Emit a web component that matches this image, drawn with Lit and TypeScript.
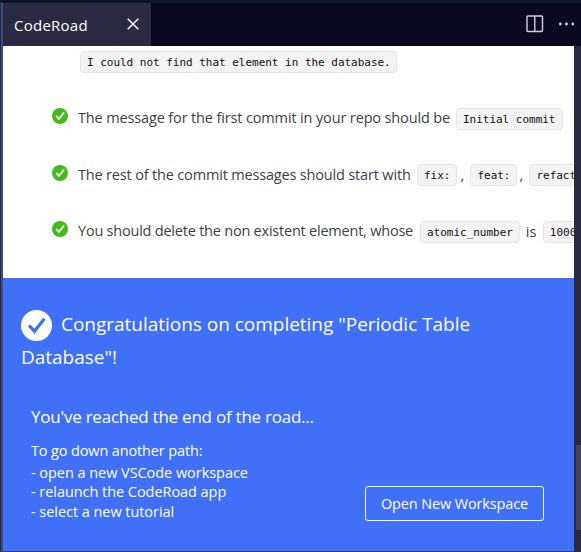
import { LitElement, html, css, svg } from "lit";
import { customElement } from "lit/decorators.js";

@customElement("check-mark")
class CheckMark extends LitElement {
  static styles = css`
    :host { display: block; flex: none; }
    svg { display: block; width: 100%; height: 100%; }
    .tick { fill: none; stroke: var(--tick, #fff); stroke-width: 3.1; stroke-linejoin: miter; stroke-linecap: round; }
  `;
  render() {
    return html`<svg viewBox="0 0 30 30">
      <circle cx="15" cy="15" r="15" fill="currentColor"></circle>
      <path class="tick" d="M8.6 15.8 13 20.6 21.8 9.4"></path>
    </svg>`;
  }
}

@customElement("app-root")
class AppRoot extends LitElement {
  static styles = css`
    :host { display: block; }
    * { box-sizing: border-box; }
    .window { width: 581px; height: 552px; display: flex; overflow: hidden; background: #292a40;
      font-family: "Open Sans", "Noto Sans", sans-serif; white-space: nowrap; }
    .edge { width: 3px; flex: none; background: #424b78; border-left: 1px solid #25284c; border-top: 3px solid #0e1727; }
    .main { flex: 1; min-width: 0; display: flex; flex-direction: column; }
    .tabs { height: 46px; flex: none; border-top: 3px solid #0e1727; background: #090922; display: flex; align-items: stretch; }
    .tab { width: 148px; background: #2a2a42; color: #fff; display: flex; align-items: center; justify-content: space-between; padding: 0 12px 0 11px; }
    .tabname { font-size: 15px; letter-spacing: 0.25px; line-height: 20px; margin-top: 1px; }
    .close { width: 12px; height: 12px; margin-top: -1px; }
    .actions { margin-left: auto; display: flex; align-items: center; gap: 14px; padding: 0 6px 2px 0; }
    svg { display: block; }
    .below { flex: 1; min-height: 0; display: flex; }
    .panel { width: 571px; flex: none; overflow: hidden; background: #fff; display: flex; flex-direction: column; border-bottom: 1px solid #3c3f74; }
    .gutter { flex: 1; background: #292a40; padding: 399px 0 0 2px; }
    .thumb { height: 85px; background: #45455a; }
    .tasks { height: 232px; flex: none; overflow: hidden; color: #3c3f44; font-size: 14.5px; }
    .detail { height: 44px; padding: 5px 0 0 77px; }
    .row { height: 56.5px; padding-left: 49px; display: flex; align-items: center; }
    .row check-mark { width: 16px; height: 16px; margin: -4px 10px 0 0; color: #45b81c; --tick: #fff; }
    .text { flex: none; line-height: 22px; }
    code { display: block; flex: none; height: 22px; padding: 0 6px; border: 1px solid #e6e6e6; border-radius: 4px;
      background: #f3f3f3; color: #111; font: 11px/21px "DejaVu Sans Mono", monospace; letter-spacing: -0.02px; }
    .row code { margin-top: 1px; }
    .row code.initial { width: 107px; }
    .detail code { width: 317px; }
    .done { flex: 1; background: #4070f8; color: #fff; padding: 30px 30px 0 18px; }
    .title { font-size: 19px; line-height: 33px; letter-spacing: -0.02px; }
    .line { display: flex; align-items: center; }
    .line check-mark { width: 31px; height: 31px; margin-right: 9px; margin-top: 2px; --tick: #4070f8; }
    .foot { margin: 30px 0 0 10px; display: flex; justify-content: space-between; align-items: flex-end; }
    .end { font-size: 17px; line-height: 26px; margin-bottom: 11px; letter-spacing: -0.24px; }
    .steps { font-size: 14.5px; line-height: 19.5px; letter-spacing: -0.05px; }
    .intro { margin-bottom: 2px; letter-spacing: -0.14px; }
    .button { width: 179px; height: 35px; border: 1px solid #fff; border-radius: 3px; background: none; color: #fff; padding: 0;
      font: 14.5px "Open Sans", sans-serif; letter-spacing: -0.14px; }
    .a { letter-spacing: -0.14px; width: 378px; }
    .b { letter-spacing: -0.17px; width: 339px; }
    .c { letter-spacing: -0.22px; width: 342px; }
    .comma { flex: none; width: 13px; padding-left: 3px; }
    .comma.last { width: 12px; padding-left: 2px; }
    .is { flex: none; width: 23px; padding-left: 6px; }
  `;
  render() {
    return html`<div class="window">
      <div class="edge"></div>
      <div class="main">
        <div class="tabs">
          <div class="tab"><span class="tabname">CodeRoad</span>
            <svg class="close" viewBox="0 0 12 12"><path d="M.7.7 11.3 11.3M11.3.7.7 11.3" stroke="#fff" stroke-width="1.5"/></svg>
          </div>
          <div class="actions">
            <svg width="18" height="18" viewBox="0 0 18 18" fill="none" stroke="#d4d2de" stroke-width="1.4"><rect x="1" y="1" width="15.5" height="15.5" rx="1"/><path d="M8.8 1v15.5"/></svg>
            <svg width="17" height="18" viewBox="0 0 17 18" fill="#d4d2de">${[2.3, 8.5, 14.8].map((x) => svg`<circle cx=${x} cy="9" r="1.4"/>`)}</svg>
          </div>
        </div>
        <div class="below">
          <div class="panel">
            <div class="tasks">
              <div class="detail"><code>I could not find that element in the database.</code></div>
              <div class="row"><check-mark></check-mark><span class="text a">The message for the first commit in your repo should be</span><code class="initial">Initial commit</code></div>
              <div class="row"><check-mark></check-mark><span class="text b">The rest of the commit messages should start with</span><code>fix:</code><span class="comma">,</span><code>feat:</code><span class="comma last">,</span><code>refactor:</code></div>
              <div class="row"><check-mark></check-mark><span class="text c">You should delete the non existent element, whose</span><code>atomic_number</code><span class="is">is</span><code>1000</code></div>
            </div>
            <div class="done">
              <div class="title">
                <div class="line"><check-mark></check-mark><span>Congratulations on completing "Periodic Table</span></div>
                <div>Database"!</div>
              </div>
              <div class="foot">
                <div>
                  <div class="end">You've reached the end of the road...</div>
                  <div class="steps">
                    <div class="intro">To go down another path:</div>
                    <div>- open a new VSCode workspace</div>
                    <div>- relaunch the CodeRoad app</div>
                    <div>- select a new tutorial</div>
                  </div>
                </div>
                <button class="button">Open New Workspace</button>
              </div>
            </div>
          </div>
          <div class="gutter"><div class="thumb"></div></div>
        </div>
      </div>
    </div>`;
  }
}
